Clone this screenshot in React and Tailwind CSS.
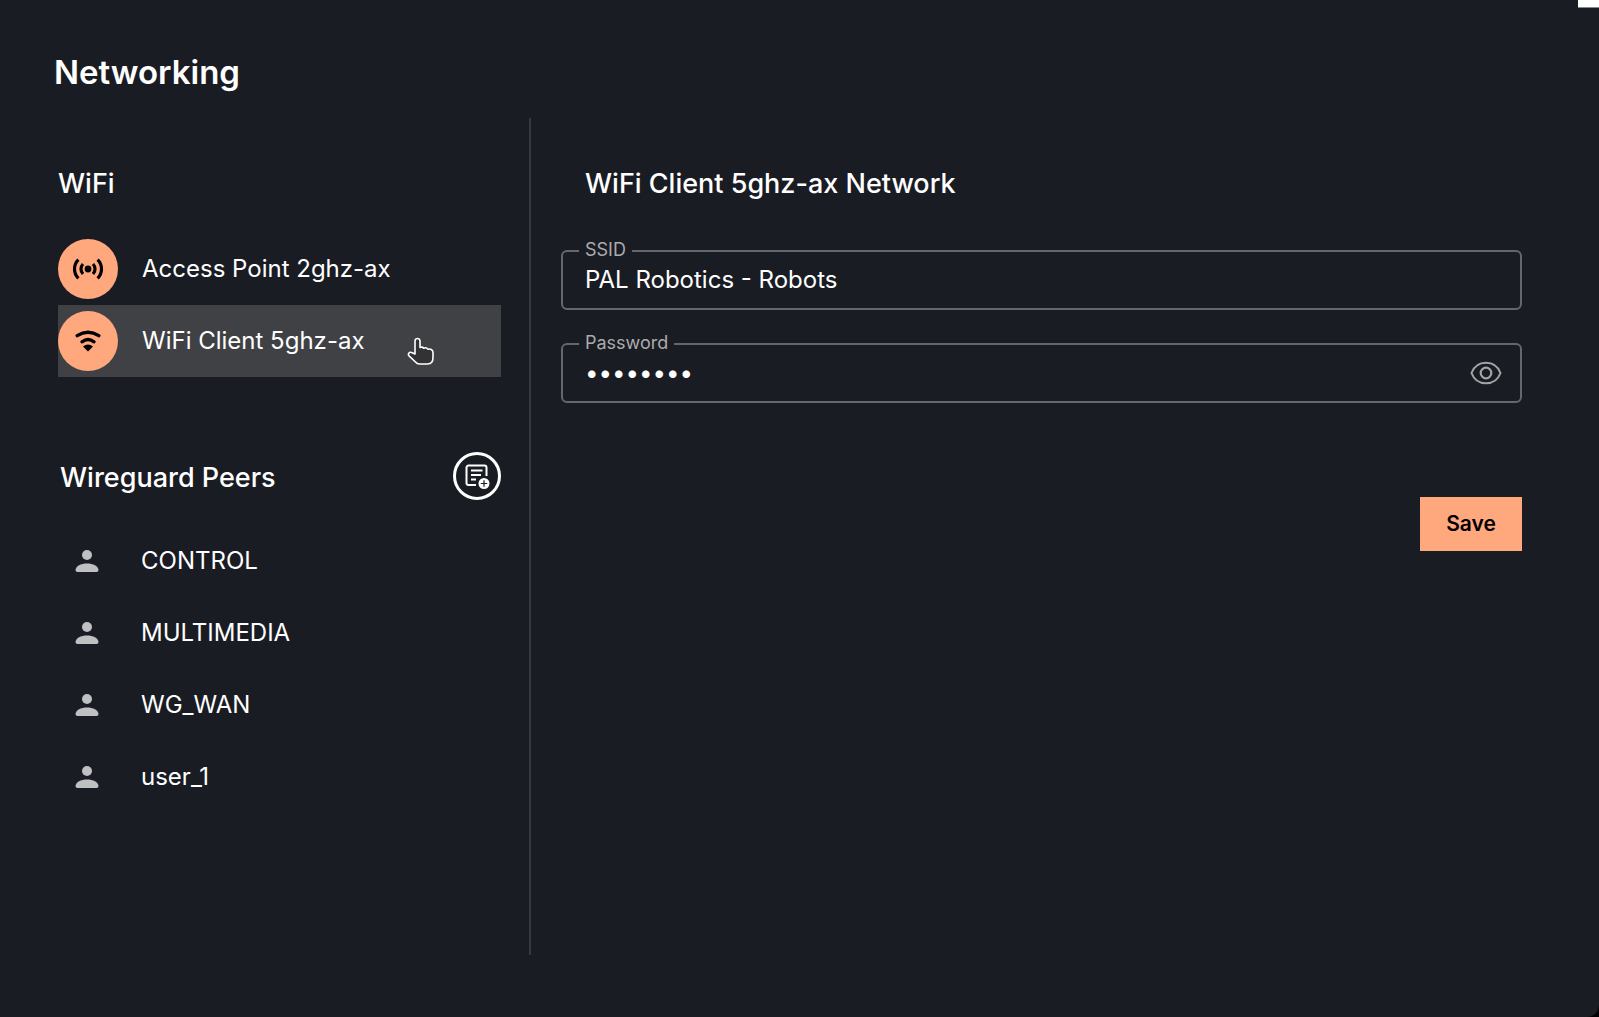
// Networking settings: WiFi interfaces and Wireguard peers
import React, { useState } from 'react';

const networks = [
  { id: 'ap', name: 'Access Point 2ghz-ax', Icon: AccessPointIcon },
  { id: 'client', name: 'WiFi Client 5ghz-ax', Icon: WifiIcon }
];

const peers = ['CONTROL', 'MULTIMEDIA', 'WG_WAN', 'user_1'];

function AccessPointIcon() {
  return (
    <svg viewBox="0 0 32 24" className="w-8 h-6" fill="none" stroke="currentColor" strokeWidth="3.2">
      <circle cx="16" cy="12" r="3.4" fill="currentColor" stroke="none" />
      <path d="M11 7a7.2 7.2 0 0 0 0 10M21 7a7.2 7.2 0 0 1 0 10" />
      <path d="M6.4 2.6a13.3 13.3 0 0 0 0 18.8M25.6 2.6a13.3 13.3 0 0 1 0 18.8" />
    </svg>
  );
}

function WifiIcon() {
  return (
    <svg viewBox="0 0 28 24" className="w-7 h-6" fill="none" stroke="currentColor" strokeWidth="3.4" strokeLinecap="round">
      <path d="M3.2 6.6Q14 0 24.8 6.6" />
      <path d="M8 12.8Q14 8.4 20 12.8" />
      <path d="M14 22.5L9 17.4Q14 13.4 19 17.4z" fill="currentColor" stroke="none" />
    </svg>
  );
}

function AddPeerIcon() {
  return (
    <svg viewBox="0 0 26 26" className="w-[26px] h-[26px]" fill="none" stroke="currentColor" strokeWidth="2">
      <path d="M12 22H4.5a2 2 0 0 1-2-2V4.5a2 2 0 0 1 2-2h16a2 2 0 0 1 2 2V13" />
      <path d="M7 7.5h11.5M7 12h10M7 16.5h5" />
      <circle cx="20" cy="20.5" r="5.5" fill="currentColor" stroke="none" />
      <path d="M20 17.3v6.4M16.8 20.5h6.4" stroke="#1a1c23" strokeWidth="1.2" />
    </svg>
  );
}

function PersonIcon() {
  return (
    <svg viewBox="0 0 24 24" className="w-6 h-6 shrink-0" fill="#bfc0c2">
      <circle cx="12" cy="6" r="5" />
      <path d="M.5 21C.5 17 6 14.4 12 14.4S23.5 17 23.5 21Q23.5 23 21.5 23H2.5Q.5 23 .5 21z" />
    </svg>
  );
}

function EyeIcon() {
  return (
    <svg viewBox="0 0 32 24" className="w-8 h-6" fill="none" stroke="currentColor" strokeWidth="2">
      <path d="M1.5 12C4 5.2 9.5 1.7 16 1.7S28 5.2 30.5 12C28 18.8 22.5 22.3 16 22.3S4 18.8 1.5 12z" />
      <circle cx="16" cy="12" r="5.3" strokeWidth="2.2" />
    </svg>
  );
}

function PointerHand() {
  return (
    <svg
      viewBox="0 0 28 28"
      className="absolute right-[66px] top-8 w-7 h-7 pointer-events-none"
      fill="#323235"
      stroke="#ffffff"
      strokeWidth="1.6"
      strokeLinejoin="round"
    >
      <path d="M8 17V4.2C8 .5 13 .5 13 4.2V10.5C14.5 9.8 16 10.2 16.8 11.2C18.2 10.5 20 10.9 20.8 12.2C23 11.5 26 12.5 26 15.5V20.5C26 24.5 24 27 20.5 27H12.5C10.5 27 9.5 26.2 8.5 25L2 18.8C.5 17 2.5 14.5 4.5 15.5z" />
    </svg>
  );
}

function Field({ id, label, children, ...inputProps }) {
  return (
    <fieldset className="min-w-0 border-2 border-[#65676b] rounded-md">
      <legend className="ml-4 px-1.5 h-5 leading-[18px] text-lg text-[#aaabad]">
        <label htmlFor={id}>{label}</label>
      </legend>
      <div className="flex items-center h-14 -mt-[9px] pl-[22px] pr-[18px]">
        <input
          id={id}
          className="flex-1 min-w-0 h-8 bg-transparent text-2xl text-white outline-none"
          {...inputProps}
        />
        {children}
      </div>
    </fieldset>
  );
}

export default function App() {
  const [selected, setSelected] = useState('client');
  const [ssid, setSsid] = useState('PAL Robotics - Robots');
  const [password, setPassword] = useState('password');
  const [showPassword, setShowPassword] = useState(false);

  const current = networks.find(n => n.id === selected);

  return (
    <div className="bg-black font-[Inter,sans-serif]">
      <div className="relative min-h-screen flex flex-col bg-[#1a1c23] text-white rounded-br-xl pt-12 pb-[62px]">
        <div className="absolute top-0 right-0 w-[21px] h-[8px] bg-white border-b border-[#86888c]" />

        <h1 className="pl-[54px] text-[33px] leading-[48px] font-semibold">Networking</h1>

        <div className="flex-1 flex mt-[22px]">
          {/* Sidebar */}
          <aside className="w-[531px] shrink-0 border-r-2 border-[#36383d] pl-[58px] pr-7">
            <h2 className="mt-12 text-[27px] leading-9 font-medium">WiFi</h2>
            <ul className="mt-[31px]">
              {networks.map(({ id, name, Icon }) => (
                <li key={id} className="relative">
                  <button
                    onClick={() => setSelected(id)}
                    className={`w-full h-[72px] flex items-center gap-6 text-left text-2xl cursor-pointer ${selected === id ? 'bg-[#404145]' : ''}`}
                  >
                    <span className="w-[60px] h-[60px] shrink-0 rounded-full bg-[#ffa77d] text-black flex items-center justify-center">
                      <Icon />
                    </span>
                    {name}
                  </button>
                  {selected === id && <PointerHand />}
                </li>
              ))}
            </ul>

            <div className="flex items-center justify-between mt-[75px]">
              <h2 className="pt-1 pl-0.5 text-[27px] leading-9 font-medium">Wireguard Peers</h2>
              <button
                aria-label="Add peer"
                className="w-12 h-12 rounded-full border-3 border-white flex items-center justify-center cursor-pointer"
              >
                <AddPeerIcon />
              </button>
            </div>
            <ul className="mt-[25px]">
              {peers.map(peer => (
                <li key={peer}>
                  <button className="w-full h-[72px] flex items-center gap-[42px] pl-[17px] text-left text-2xl cursor-pointer">
                    <PersonIcon />
                    {peer}
                  </button>
                </li>
              ))}
            </ul>
          </aside>

          {/* Selected network */}
          <main className="flex-1 min-w-0 pl-[30px] pr-[77px]">
            <h2 className="mt-12 pl-6 text-[27px] leading-9 font-medium">{current.name} Network</h2>
            <form className="mt-[39px] flex flex-col" onSubmit={e => e.preventDefault()}>
              <div className="flex flex-col gap-6">
                <Field id="ssid" label="SSID" type="text" value={ssid} onChange={e => setSsid(e.target.value)} />
                <Field
                  id="password"
                  label="Password"
                  type={showPassword ? 'text' : 'password'}
                  value={password}
                  onChange={e => setPassword(e.target.value)}
                >
                  <button
                    type="button"
                    aria-label="Show password"
                    onClick={() => setShowPassword(!showPassword)}
                    className="text-[#a3a4a7] cursor-pointer"
                  >
                    <EyeIcon />
                  </button>
                </Field>
              </div>
              <button
                type="submit"
                className="self-end mt-[94px] w-[102px] h-[54px] bg-[#ffa77d] text-black text-[21px] font-semibold cursor-pointer"
              >
                Save
              </button>
            </form>
          </main>
        </div>
      </div>
    </div>
  );
}
